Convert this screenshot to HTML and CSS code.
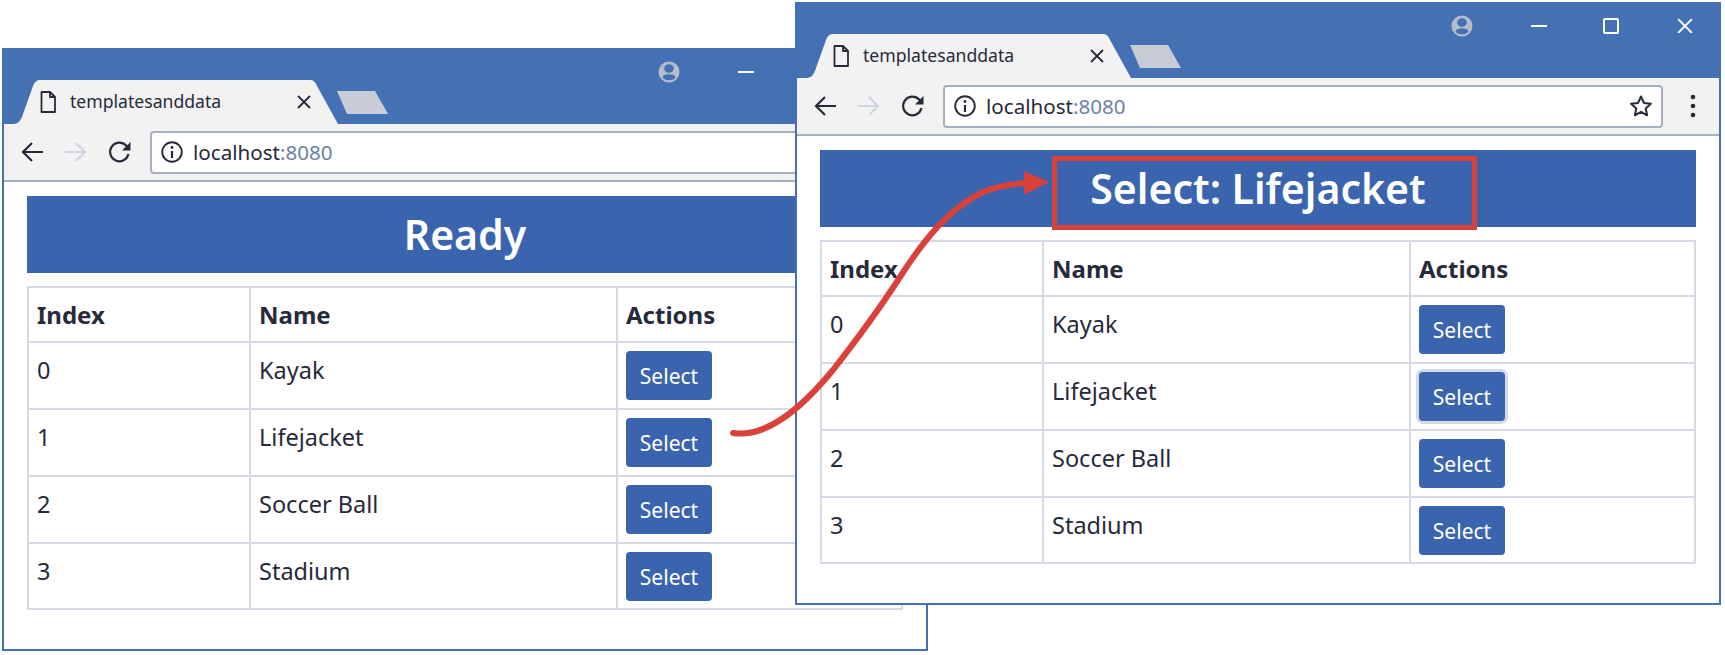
FILE: index.html
```html
<!DOCTYPE html>
<html lang="en">
<head>
  <meta charset="UTF-8">
  <title>templatesanddata</title>
  <link rel="stylesheet" href="styles.css">
</head>
<body>
  <svg class="defs" width="0" height="0">
    <symbol id="i-page" viewBox="0 0 16 22"><path d="M1.5 1h8.500l5 5v15h-13.500z M10 1v5h5" fill="none" stroke="currentColor" stroke-width="1.800" stroke-linejoin="round"/></symbol>
    <symbol id="i-close" viewBox="0 0 14 14"><path d="M1 1l12 12M13 1l-12 12" fill="none" stroke="currentColor" stroke-width="1.800"/></symbol>
    <symbol id="i-back" viewBox="0 0 24 24"><path d="M23 12h-20M12 3l-9 9 9 9" fill="none" stroke="currentColor" stroke-width="2.200"/></symbol>
    <symbol id="i-reload" viewBox="0 0 24 24"><path d="M20.500 14a9.300 9.300 0 1 1-2.400-8.500l2.400 2.500" fill="none" stroke="currentColor" stroke-width="2.200"/><path d="M22.500 2v8.500h-8.500z" fill="currentColor"/></symbol>
    <symbol id="i-info" viewBox="0 0 22 22"><circle cx="11" cy="11" r="9.800" fill="none" stroke="currentColor" stroke-width="1.900"/><path d="M11 10v7" stroke="currentColor" stroke-width="2.200"/><circle cx="11" cy="6.500" r="1.400" fill="currentColor"/></symbol>
    <symbol id="i-star" viewBox="0 0 24 24"><path d="M12 2.500l2.900 6.400 7 .8-5.200 4.700 1.400 6.900-6.100-3.500-6.100 3.500 1.400-6.900-5.200-4.700 7-.8z" fill="none" stroke="currentColor" stroke-width="2" stroke-linejoin="round"/></symbol>
    <symbol id="i-avatar" viewBox="0 0 22 22"><circle cx="11" cy="11" r="10.500" fill="currentColor"/><ellipse cx="11" cy="7.500" rx="4.800" ry="4.200" fill="#4470b4"/><ellipse cx="11" cy="16.200" rx="6.200" ry="3" fill="#4470b4"/></symbol>
    <symbol id="i-dots" viewBox="0 0 6 26"><circle cx="3" cy="4" r="2.300" fill="currentColor"/><circle cx="3" cy="13" r="2.300" fill="currentColor"/><circle cx="3" cy="22" r="2.300" fill="currentColor"/></symbol>
  </svg>

  <div class="stage">
    <div class="win win-left">
      <div class="titlebar">
        <div class="tab">
          <svg class="tab-icon"><use href="#i-page"/></svg>
          <span class="tab-title">templatesanddata</span>
          <svg class="tab-close"><use href="#i-close"/></svg>
        </div>
        <div class="newtab"></div>
        <div class="controls">
          <svg class="ctl-avatar"><use href="#i-avatar"/></svg>
          <span class="ctl-min"></span>
          <span class="ctl-max"></span>
          <svg class="ctl-close"><use href="#i-close"/></svg>
        </div>
      </div>
      <div class="toolbar">
        <svg class="nav"><use href="#i-back"/></svg>
        <svg class="nav nav-fwd"><use href="#i-back"/></svg>
        <svg class="nav"><use href="#i-reload"/></svg>
        <div class="address">
          <svg class="addr-info"><use href="#i-info"/></svg>
          <span class="addr-text">localhost<span class="addr-port">:8080</span></span>
          <svg class="addr-star"><use href="#i-star"/></svg>
        </div>
        <svg class="menu"><use href="#i-dots"/></svg>
      </div>
      <div class="content">
        <div class="banner">Ready</div>
        <table class="items">
          <thead>
            <tr><th>Index</th><th>Name</th><th>Actions</th></tr>
          </thead>
          <tbody>
            <tr><td>0</td><td>Kayak</td><td><button class="btn">Select</button></td></tr>
            <tr><td>1</td><td>Lifejacket</td><td><button class="btn">Select</button></td></tr>
            <tr><td>2</td><td>Soccer Ball</td><td><button class="btn">Select</button></td></tr>
            <tr><td>3</td><td>Stadium</td><td><button class="btn">Select</button></td></tr>
          </tbody>
        </table>
      </div>
    </div>

    <div class="win win-right">
      <div class="titlebar">
        <div class="tab">
          <svg class="tab-icon"><use href="#i-page"/></svg>
          <span class="tab-title">templatesanddata</span>
          <svg class="tab-close"><use href="#i-close"/></svg>
        </div>
        <div class="newtab"></div>
        <div class="controls">
          <svg class="ctl-avatar"><use href="#i-avatar"/></svg>
          <span class="ctl-min"></span>
          <span class="ctl-max"></span>
          <svg class="ctl-close"><use href="#i-close"/></svg>
        </div>
      </div>
      <div class="toolbar">
        <svg class="nav"><use href="#i-back"/></svg>
        <svg class="nav nav-fwd"><use href="#i-back"/></svg>
        <svg class="nav"><use href="#i-reload"/></svg>
        <div class="address">
          <svg class="addr-info"><use href="#i-info"/></svg>
          <span class="addr-text">localhost<span class="addr-port">:8080</span></span>
          <svg class="addr-star"><use href="#i-star"/></svg>
        </div>
        <svg class="menu"><use href="#i-dots"/></svg>
      </div>
      <div class="content">
        <div class="banner">Select: Lifejacket</div>
        <table class="items">
          <thead>
            <tr><th>Index</th><th>Name</th><th>Actions</th></tr>
          </thead>
          <tbody>
            <tr><td>0</td><td>Kayak</td><td><button class="btn">Select</button></td></tr>
            <tr><td>1</td><td>Lifejacket</td><td><button class="btn btn-focus">Select</button></td></tr>
            <tr><td>2</td><td>Soccer Ball</td><td><button class="btn">Select</button></td></tr>
            <tr><td>3</td><td>Stadium</td><td><button class="btn">Select</button></td></tr>
          </tbody>
        </table>
      </div>
    </div>

    <!-- callout drawn over both windows -->
    <div class="callout-box"></div>
    <svg class="callout-arrow" viewBox="0 0 1725 655">
      <path d="M733 433C766 438 800 410 833 370C858 338 880 308 900 277C925 238 950 208 983 192C998 186 1010 184 1028 183" fill="none" stroke="#d9423a" stroke-width="6" stroke-linecap="round"/>
      <path d="M1024 171L1049 182L1024 195z" fill="#d9423a"/>
    </svg>
  </div>
</body>
</html>
```

FILE: styles.css
```css
body {
  margin: 0;
  background: #fff;
  font-family: "Noto Sans", "Open Sans", sans-serif;
  color: #272a3a;
}
.defs {
  position: absolute;
}
.stage {
  position: relative;
  width: 1725px;
  height: 655px;
  overflow: hidden;
}

/* browser windows */
.win {
  position: absolute;
  box-sizing: border-box;
  width: 926px;
  height: 603px;
  border: 2px solid #4470b4;
  background: #fff;
}
.win-left {
  left: 2px;
  top: 48px;
}
.win-right {
  left: 795px;
  top: 2px;
}

.titlebar {
  display: flex;
  align-items: flex-end;
  height: 74px;
  padding-left: 9px;
  background: #4470b4;
}
.tab {
  display: flex;
  align-items: center;
  box-sizing: border-box;
  width: 325px;
  height: 44px;
  padding-left: 27px;
  background: #f2f2f2;
  clip-path: path("M0 44C6 44 8 40 10 34L20 6C22 1 24 0 28 0L296 0C300 0 302 1 304 6L325 44Z");
}
.tab-icon {
  width: 16px;
  height: 22px;
  color: #262b3a;
}
.tab-title {
  margin-top: -2px;
  margin-left: 14px;
  font-size: 17.600px;
  color: #272a3a;
}
.tab-close {
  width: 14px;
  height: 14px;
  margin-left: 76px;
  color: #262b3a;
}
.newtab {
  width: 51px;
  height: 23px;
  margin-bottom: 10px;
  margin-left: -1px;
  background: #c8ccd6;
  clip-path: polygon(0 0, 38px 0, 100% 100%, 10px 100%);
}
.controls {
  display: flex;
  align-items: center;
  align-self: flex-start;
  gap: 48px;
  margin-left: auto;
  padding: 11px 22px 0 0;
  color: #fff;
}
.ctl-avatar {
  width: 22px;
  height: 22px;
  margin-right: 8px;
  color: #b5bccb;
}
.ctl-min {
  width: 16px;
  height: 2px;
  margin: 0 6px 0 2px;
  background: #fff;
}
.ctl-max {
  box-sizing: border-box;
  width: 16px;
  height: 16px;
  margin: 0 6px 0 2px;
  border: 2px solid #fff;
  border-radius: 2px;
}
.ctl-close {
  width: 16px;
  height: 16px;
  margin: 0 4px;
}

.toolbar {
  display: flex;
  align-items: center;
  gap: 20px;
  height: 56px;
  padding: 0 14px 0 16px;
  background: #f2f2f2;
  border-bottom: 2px solid #a6aec2;
  color: #262b3a;
}
.nav {
  flex: none;
  width: 24px;
  height: 24px;
}
.nav-fwd {
  color: #cfd5e2;
  transform: scaleX(-1);
}
.address {
  display: flex;
  flex: 1;
  align-items: center;
  box-sizing: border-box;
  height: 43px;
  margin-left: -2px;
  margin-right: -2px;
  padding: 0 8px 0 9px;
  background: #fff;
  border: 2px solid #a6aec2;
  border-radius: 4px;
}
.addr-info {
  width: 22px;
  height: 22px;
}
.addr-text {
  flex: 1;
  margin-left: 10px;
  font-size: 20.600px;
  color: #272a3a;
}
.addr-port {
  color: #6b7fa5;
}
.addr-star {
  width: 24px;
  height: 24px;
}
.menu {
  flex: none;
  width: 6px;
  height: 26px;
  margin: 0 9px;
}

/* page */
.content {
  padding: 14px 23px 0;
}
.banner {
  height: 77px;
  background: #3b64ae;
  color: #fff;
  font-size: 41px;
  font-weight: 600;
  line-height: 77px;
  text-align: center;
}
.items {
  width: 876px;
  margin-top: 13px;
  border-collapse: collapse;
  table-layout: fixed;
  font-size: 23.500px;
}
.items th,
.items td {
  padding: 9px 8px 7px;
  border: 2px solid #d5d8e5;
  line-height: 37px;
  text-align: left;
  vertical-align: top;
}
.items th {
  padding: 8px;
  font-size: 24px;
}
.items td:last-child {
  padding: 8px;
}
.items tr:last-child td:last-child {
  padding-bottom: 7px;
}
.items th:nth-child(1) {
  width: 204px;
}
.items th:nth-child(2) {
  width: 349px;
}
.btn {
  display: block;
  width: 86px;
  height: 49px;
  padding: 0;
  background: #3b64ae;
  border: 0;
  border-radius: 4px;
  color: #fff;
  font-family: inherit;
  font-size: 21px;
}
.btn-focus {
  box-shadow: 0 0 0 3px #d5dbe8;
}

/* red annotation */
.callout-box {
  position: absolute;
  left: 1052px;
  top: 156px;
  box-sizing: border-box;
  width: 425px;
  height: 74px;
  border: 5px solid #d9423a;
}
.callout-arrow {
  position: absolute;
  left: 0;
  top: 0;
  width: 1725px;
  height: 655px;
}
```
